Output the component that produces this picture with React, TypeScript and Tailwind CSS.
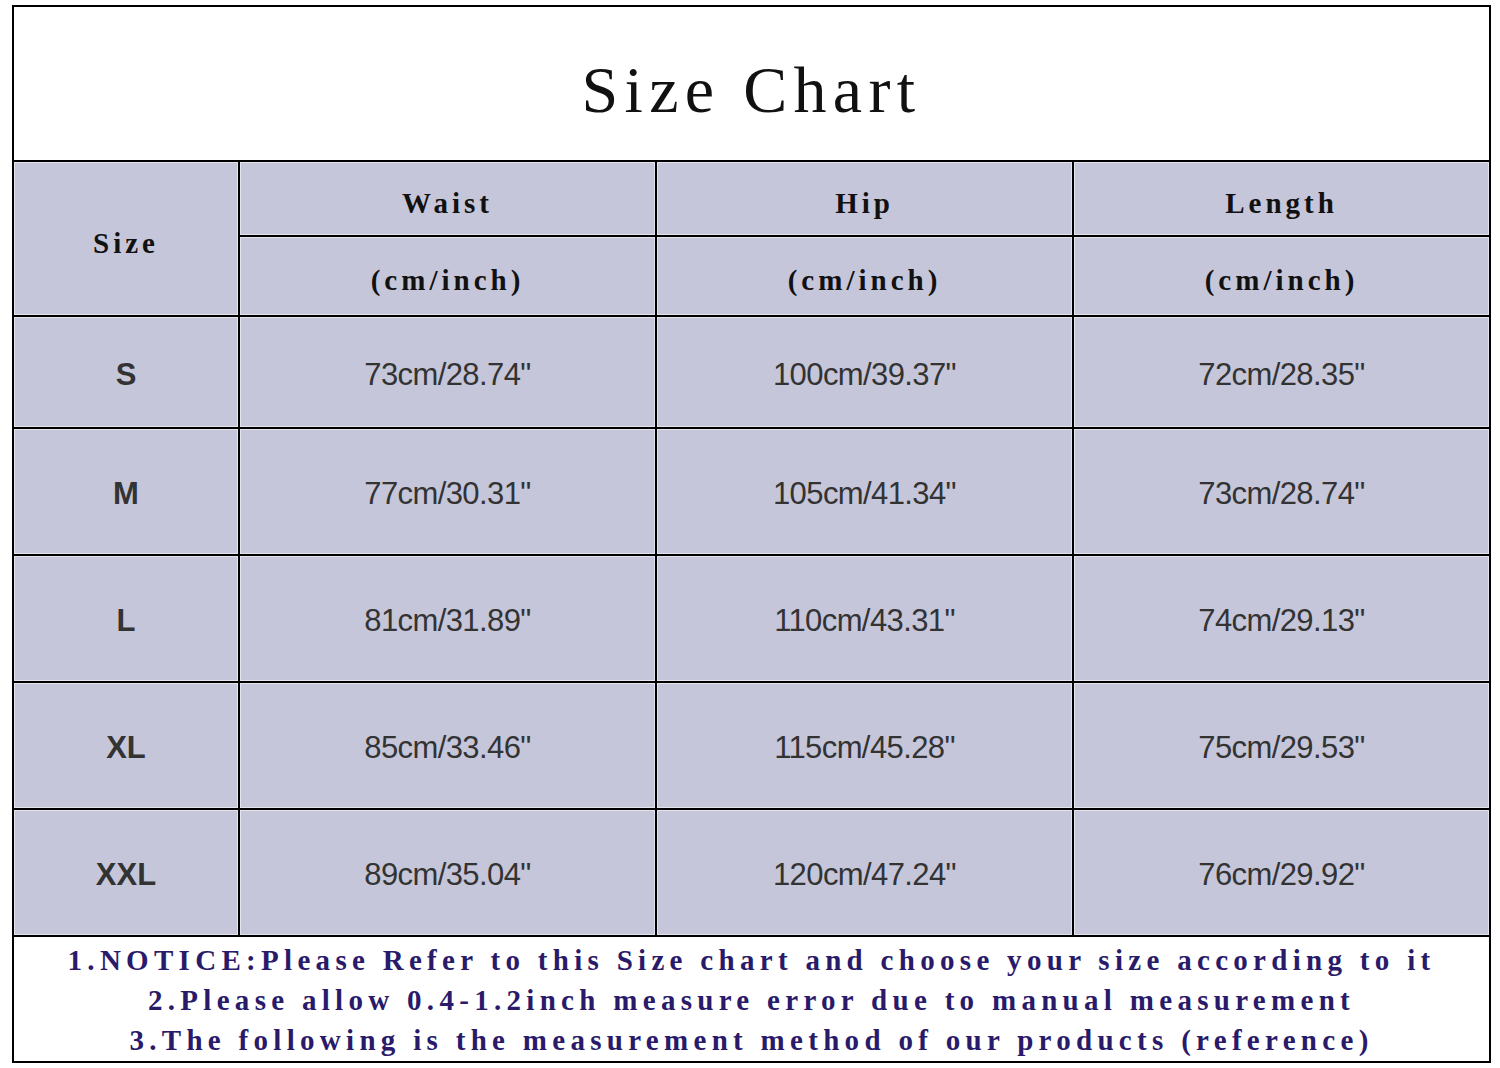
import React from "react";

const rows = [
  { size: "S", waist: "73cm/28.74\"", hip: "100cm/39.37\"", length: "72cm/28.35\"", h: "h-[110px]" },
  { size: "M", waist: "77cm/30.31\"", hip: "105cm/41.34\"", length: "73cm/28.74\"", h: "h-[125px]" },
  { size: "L", waist: "81cm/31.89\"", hip: "110cm/43.31\"", length: "74cm/29.13\"", h: "h-[125px]" },
  { size: "XL", waist: "85cm/33.46\"", hip: "115cm/45.28\"", length: "75cm/29.53\"", h: "h-[125px]" },
  { size: "XXL", waist: "89cm/35.04\"", hip: "120cm/47.24\"", length: "76cm/29.92\"", h: "h-[125px]" },
];

const serif = "font-['Liberation_Serif','Times_New_Roman',serif]";
const cell = "bg-[#c6c6da] flex items-center justify-center shadow-[inset_0_0_0_1px_#e4e4ee]";
const head = `${cell} ${serif} font-bold text-[29px] tracking-[4px] text-[#111] pt-[10px]`;
const data = `${cell} font-['Liberation_Sans',Arial,sans-serif] text-[31px] tracking-[-0.6px] text-[#333] pt-[6px]`;

export default function App() {
  return (
    <div className="min-h-screen bg-white pt-[5px] pl-[12px]">
      <div className="w-[1479px] border-2 border-black bg-black grid grid-cols-[224px_415px_415px_415px] gap-[2px]">
        <div className="col-span-4 h-[153px] bg-white flex items-center justify-center pt-[12px]">
          <span className={`${serif} text-[66px] tracking-[6.3px] text-[#111] leading-none`}>Size Chart</span>
        </div>

        <div className={`${head} row-span-2`}>Size</div>
        <div className={`${head} h-[73px]`}>Waist</div>
        <div className={head}>Hip</div>
        <div className={head}>Length</div>
        <div className={`${head} h-[78px]`}>(cm/inch)</div>
        <div className={head}>(cm/inch)</div>
        <div className={head}>(cm/inch)</div>

        {rows.map((r) => (
          <React.Fragment key={r.size}>
            <div className={`${data} ${r.h} font-bold text-[28px] tracking-normal`}>{r.size}</div>
            <div className={data}>{r.waist}</div>
            <div className={data}>{r.hip}</div>
            <div className={data}>{r.length}</div>
          </React.Fragment>
        ))}

        <div className={`col-span-4 h-[124px] bg-white flex flex-col items-center justify-center pt-[2px] ${serif} font-bold text-[29px] tracking-[5.3px] leading-[40px] text-[#2a1a6a]`}>
          <div>1.NOTICE:Please Refer to this Size chart and choose your size according to it</div>
          <div>2.Please allow 0.4-1.2inch measure error due to manual measurement</div>
          <div>3.The following is the measurement method of our products (reference)</div>
        </div>
      </div>
    </div>
  );
}
